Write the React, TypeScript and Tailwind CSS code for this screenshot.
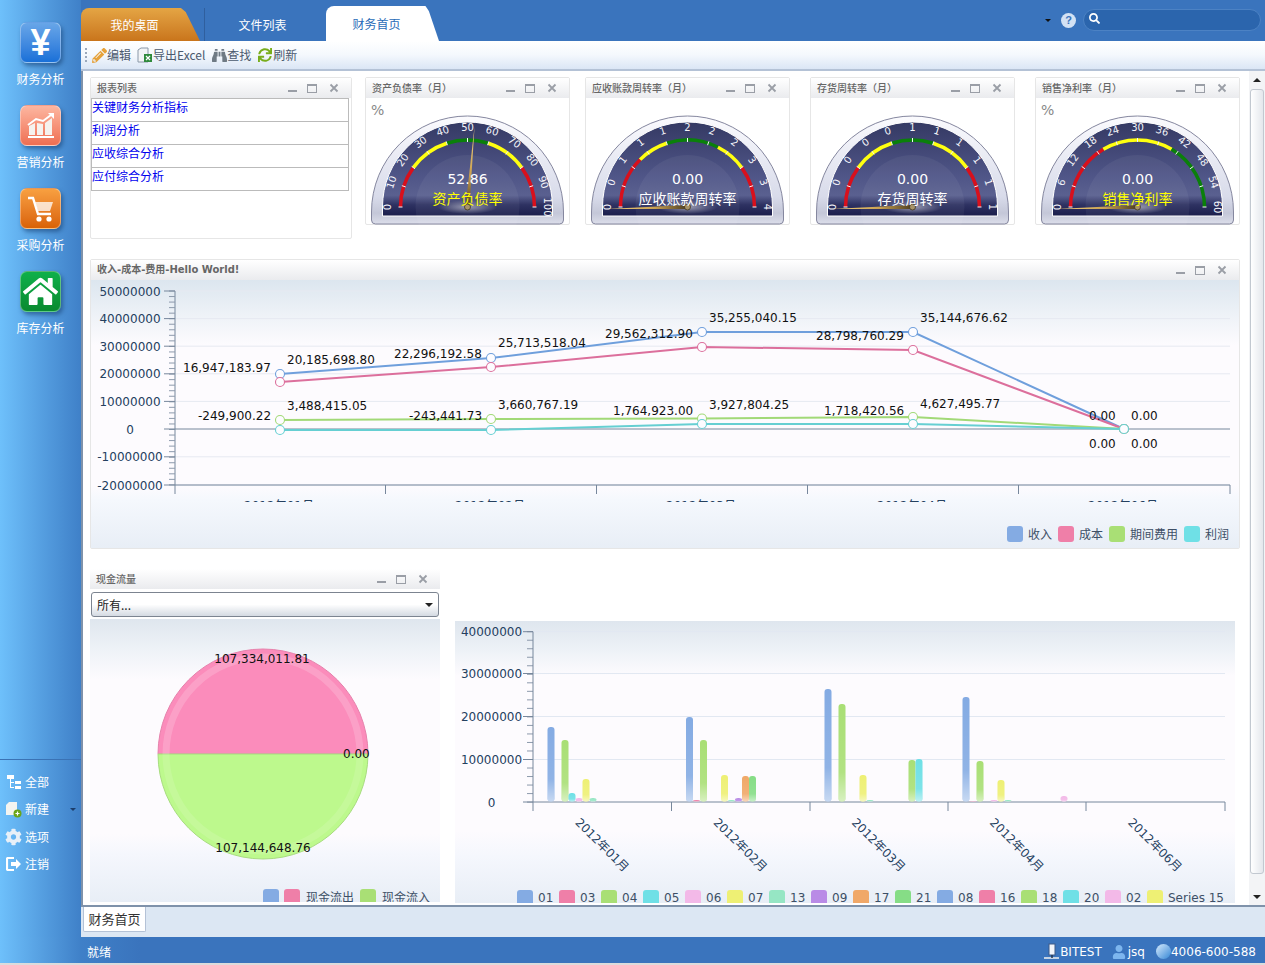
import { FaBinoculars, FaCog, FaHome, FaPencilAlt, FaSearch, FaSync, FaUser } from 'react-icons/fa';

const uiFont = "font-['Noto_Sans_CJK_SC','Liberation_Sans',sans-serif]";
const chartFont = "font-['DejaVu_Sans','Noto_Sans_CJK_SC',sans-serif]";

function WindowButtons({ right = false }: { right?: boolean }) {
    return (
        <div className={`flex items-start gap-[10px] text-[#8b8f96] ${right ? 'mr-[12px]' : 'mr-[12px]'}`}>
            <span className="mt-[7px] h-[2px] w-[9px] bg-[#9a9ea6]" />
            <span className="mt-[1px] h-[9px] w-[10px] border border-[#9a9ea6] border-t-2" />
            <svg width="10" height="10" viewBox="0 0 10 10" className="ml-[2px]">
                <path d="M1.5 1.5l7 7M8.5 1.5l-7 7" stroke="#9a9ea6" strokeWidth="1.8" />
            </svg>
        </div>
    );
}

function PanelHeader({ title, buttons = true, bold = false }: { title: string; buttons?: boolean; bold?: boolean }) {
    return (
        <div className="flex h-[20px] shrink-0 items-center justify-between bg-gradient-to-b from-white to-[#eaebee] pl-[6px]">
            <span className={`text-[10px] leading-none text-[#666] ${bold ? "font-bold font-['DejaVu_Sans','Noto_Sans_CJK_SC',sans-serif]" : 'font-medium'}`}>{title}</span>
            {buttons && <WindowButtons />}
        </div>
    );
}

type Seg = [number, number, string];

interface GaugeProps {
    id: string;
    title: string;
    value: string;
    labels: string[];
    segs: Seg[];
    needle: number;
    titleColor: string;
    percent?: boolean;
    className?: string;
}

function Gauge({ id, title, value, labels, segs, needle, titleColor, percent, className = '' }: GaugeProps) {
    const cx = 101.5;
    const cy = 109;
    const pt = (r: number, p: number) => [cx - r * Math.cos(p * Math.PI), cy - r * Math.sin(p * Math.PI)];
    const rad = (needle * Math.PI) / 180;
    const tip = [cx - 81 * Math.cos(rad), cy - 81 * Math.sin(rad)];
    const nx = Math.sin(rad) * 2;
    const ny = -Math.cos(rad) * 2;

    return (
        <div className={`h-[148px] w-[205px] shrink-0 rounded-[2px] border border-[#e6e6e6] bg-white ${className}`}>
            <PanelHeader title={title} />
            <svg width="203" height="127" viewBox="0 0 203 127" className={`block ${chartFont}`}>
                <defs>
                    <linearGradient id={`${id}-bezel`} x1="0" y1="0" x2="0" y2="1">
                        <stop offset="0" stopColor="#fbfbfe" />
                        <stop offset="0.75" stopColor="#d8dbea" />
                        <stop offset="0.9" stopColor="#c4c7d8" />
                        <stop offset="1" stopColor="#dcdeea" />
                    </linearGradient>
                    <linearGradient id={`${id}-face`} x1="0" y1="0" x2="0" y2="1">
                        <stop offset="0" stopColor="#343963" />
                        <stop offset="0.55" stopColor="#4e5486" />
                        <stop offset="0.78" stopColor="#5a6090" />
                        <stop offset="0.88" stopColor="#2e3262" />
                        <stop offset="1" stopColor="#1b1e4c" />
                    </linearGradient>
                    <linearGradient id={`${id}-needle`} gradientUnits="userSpaceOnUse" x1={tip[0]} y1={tip[1]} x2={cx} y2={cy}>
                        <stop offset="0" stopColor="#f6d684" />
                        <stop offset="0.6" stopColor="#c9a050" />
                        <stop offset="1" stopColor="#4a3c20" />
                    </linearGradient>
                    <radialGradient id={`${id}-glow`}>
                        <stop offset="0" stopColor="#ffffff" stopOpacity="0.5" />
                        <stop offset="1" stopColor="#ffffff" stopOpacity="0" />
                    </radialGradient>
                </defs>
                <path
                    d={`M${cx - 96} ${cy + 5} A96 96 0 0 1 ${cx + 96} ${cy + 5} V${cy + 13} Q${cx + 96} ${cy + 17} ${cx + 92} ${cy + 17} H${cx - 92} Q${cx - 96} ${cy + 17} ${cx - 96} ${cy + 13} Z`}
                    fill={`url(#${id}-bezel)`}
                    stroke="#85879f"
                />
                <path
                    d={`M${cx - 85} ${cy + 9} V${cy} A85 85 0 0 1 ${cx + 85} ${cy} V${cy + 9} Z`}
                    fill={`url(#${id}-face)`}
                    stroke="#ffffff"
                />
                <circle cx={cx} cy={cy} r="52" fill="#ffffff" opacity="0.05" />
                <ellipse cx={cx} cy={cy} rx="30" ry="7" fill={`url(#${id}-glow)`} />
                {segs.map(([a, b, color]) => {
                    const p0 = pt(67, a);
                    const p1 = pt(67, b);
                    return <path key={a} d={`M${p0[0]} ${p0[1]} A67 67 0 0 1 ${p1[0]} ${p1[1]}`} fill="none" stroke={color} strokeWidth="3.5" />;
                })}
                {labels.map((label, i) => {
                    const p = i / 10;
                    const a = pt(65, p);
                    const b = pt(69, p);
                    const t = pt(80, p);
                    return (
                        <g key={i}>
                            <line x1={a[0]} y1={a[1]} x2={b[0]} y2={b[1]} stroke="#f4f4f8" strokeWidth="1" />
                            <text
                                x={t[0]}
                                y={t[1]}
                                fill="#f4f5fa"
                                fontSize="10"
                                textAnchor="middle"
                                dominantBaseline="central"
                                transform={`rotate(${p * 180 - 90} ${t[0]} ${t[1]})`}
                            >
                                {label}
                            </text>
                        </g>
                    );
                })}
                <polygon points={`${cx + nx},${cy + ny} ${tip[0]},${tip[1]} ${cx - nx},${cy - ny}`} fill={`url(#${id}-needle)`} />
                <circle cx={cx} cy={cy} r="3" fill="#a89468" stroke="#3c3420" strokeWidth="0.8" />
                <text x={cx} y="86" fill="#ffffff" fontSize="14" textAnchor="middle">{value}</text>
                <text x={cx} y="106" fill={titleColor} fontSize="14" textAnchor="middle" className={uiFont}>{title.replace('（月）', '')}</text>
                {percent && <text x="5" y="17" fill="#888" fontSize="14">%</text>}
            </svg>
        </div>
    );
}

function Swatch({ color }: { color: string }) {
    return <span className="h-[16px] w-[16px] shrink-0 rounded-[3px]" style={{ background: color }} />;
}

const lineSeries = [
    { color: '#6f9fdc', pts: [[279, 374], [490, 358], [701, 332], [912, 332], [1123, 429]] },
    { color: '#dc6f9c', pts: [[279, 382], [490, 367], [701, 347], [912, 350], [1123, 429]] },
    { color: '#a2d977', pts: [[279, 420], [490, 419], [701, 418.5], [912, 417], [1123, 429]] },
    { color: '#66cfd2', pts: [[279, 430], [490, 430], [701, 424], [912, 424], [1123, 429]] },
];

const lineLabels: [string, number, number][] = [
    ['16,947,183.97', 182, 372], ['20,185,698.80', 286, 364], ['22,296,192.58', 393, 358], ['25,713,518.04', 497, 347],
    ['29,562,312.90', 604, 338], ['35,255,040.15', 708, 322], ['28,798,760.29', 815, 340], ['35,144,676.62', 919, 322],
    ['-249,900.22', 197, 420], ['3,488,415.05', 286, 410], ['-243,441.73', 408, 420], ['3,660,767.19', 497, 409],
    ['1,764,923.00', 612, 415], ['3,927,804.25', 708, 409], ['1,718,420.56', 823, 415], ['4,627,495.77', 919, 408],
    ['0.00', 1088, 420], ['0.00', 1130, 420], ['0.00', 1088, 448], ['0.00', 1130, 448],
];

function LineChart() {
    const yTicks = [291, 318.6, 346.2, 373.8, 401.4, 429, 456.8, 485];
    const yLabels = ['50000000', '40000000', '30000000', '20000000', '10000000', '0', '-10000000', '-20000000'];
    const minor = Array.from({ length: 36 }, (_, i) => 291 + i * 5.54);
    return (
        <svg width="1148" height="222" viewBox="90 280 1148 222" className={`block ${chartFont}`}>
            {yTicks.map((y, i) => (
                <line key={y} x1="174" x2="1229" y1={y} y2={y} stroke={i === 5 ? '#77879c' : '#e6e9f1'} />
            ))}
            <line x1="174" x2="174" y1="291" y2="494" stroke="#77879c" />
            <line x1="174" x2="1229" y1="485" y2="485" stroke="#77879c" />
            {minor.map((y) => (
                <line key={y} x1="168" x2="174" y1={y} y2={y} stroke="#8d9aac" />
            ))}
            {yTicks.map((y, i) => (
                <g key={y}>
                    <line x1="163" x2="174" y1={y} y2={y} stroke="#77879c" />
                    <text x="129" y={y + 4.5} fontSize="12" fill="#24405f" textAnchor="middle">{yLabels[i]}</text>
                </g>
            ))}
            {[384.5, 595.5, 806.5, 1017.5, 1229].map((x) => (
                <line key={x} x1={x} x2={x} y1="485" y2="494" stroke="#77879c" />
            ))}
            {['2012年01月', '2012年02月', '2012年03月', '2012年04月', '2012年06月'].map((t, i) => (
                <text key={t} x={278 + i * 211} y="510" fontSize="12" fill="#24405f" textAnchor="middle">{t}</text>
            ))}
            {lineSeries.map((s) => (
                <g key={s.color}>
                    <polyline points={s.pts.map((p) => p.join(',')).join(' ')} fill="none" stroke={s.color} strokeWidth="2" />
                    {s.pts.map((p) => (
                        <circle key={p[0]} cx={p[0]} cy={p[1]} r="4.5" fill="#fdfcff" stroke={s.color} strokeWidth="1.1" />
                    ))}
                </g>
            ))}
            {lineLabels.map(([t, x, y]) => (
                <text key={`${t}${x}${y}`} x={x} y={y} fontSize="12" fill="#111">{t}</text>
            ))}
        </svg>
    );
}

const barColors = ['#84abe3', '#ef7fa8', '#a9df75', '#6fe0e6', '#f3b9e8', '#eef074', '#96e6c4', '#b98be6', '#f0a868', '#86dd86', '#84abe3', '#ef7fa8', '#a9df75', '#6fe0e6', '#f3b9e8', '#eef074'];
const barNames = ['01', '03', '04', '05', '06', '07', '13', '09', '17', '21', '08', '16', '18', '20', '02', 'Series 15'];

// [series index, top y] per month
const barData: [number, number][][] = [
    [[0, 727], [2, 740], [3, 793], [4, 798], [5, 779], [6, 798]],
    [[0, 717], [1, 800], [2, 740], [5, 775], [6, 800], [7, 798], [8, 776], [9, 776]],
    [[0, 689], [2, 704], [5, 775], [6, 800], [12, 760], [13, 759]],
    [[0, 697], [1, 801], [2, 761], [4, 800], [5, 780], [6, 800], [14, 796]],
];

function BarChart() {
    const yTicks = [631.7, 673.5, 716.5, 759.5, 802];
    const labels = ['40000000', '30000000', '20000000', '10000000', '0'];
    const minor = Array.from({ length: 21 }, (_, i) => 631.7 + i * 8.52);
    const cats = [532, 670.5, 809, 947, 1085];
    return (
        <svg width="780" height="269" viewBox="454 621 780 269" className={`block ${chartFont}`}>
            <defs>
                <linearGradient id="barshine" x1="0" y1="0" x2="0" y2="1">
                    <stop offset="0" stopColor="#ffffff" stopOpacity="0" />
                    <stop offset="0.7" stopColor="#ffffff" stopOpacity="0.1" />
                    <stop offset="1" stopColor="#ffffff" stopOpacity="0.55" />
                </linearGradient>
            </defs>
            {yTicks.slice(0, 4).map((y) => (
                <line key={y} x1="532" x2="1224" y1={y} y2={y} stroke="#e2e8f2" />
            ))}
            {minor.map((y) => (
                <line key={y} x1="526" x2="532" y1={y} y2={y} stroke="#8d9aac" />
            ))}
            {yTicks.map((y, i) => (
                <g key={y}>
                    <line x1="522" x2="532" y1={y} y2={y} stroke="#77879c" />
                    <text x="490.5" y={y + 4.5} fontSize="12" fill="#24405f" textAnchor="middle">{labels[i]}</text>
                </g>
            ))}
            <line x1="532" x2="532" y1="631.7" y2="811" stroke="#77879c" />
            <line x1="532" x2="1224" y1="802" y2="802" stroke="#77879c" />
            {[670.5, 809, 947, 1085, 1224].map((x) => (
                <line key={x} x1={x} x2={x} y1="802" y2="811" stroke="#77879c" />
            ))}
            {barData.map((month, m) =>
                month.map(([s, top]) => {
                    const x = cats[m] + 14.5 + s * 7;
                    return (
                        <g key={`${m}-${s}`}>
                            <rect x={x} y={top} width="7" height={801.5 - top} rx="3" fill={barColors[s]} />
                            <rect x={x} y={top} width="7" height={801.5 - top} rx="3" fill="url(#barshine)" />
                        </g>
                    );
                }),
            )}
            {['2012年01月', '2012年02月', '2012年03月', '2012年04月', '2012年06月'].map((t, i) => {
                const x = 601 + i * 138.2;
                return (
                    <text key={t} x={x} y="849" fontSize="12" fill="#24405f" textAnchor="middle" transform={`rotate(45 ${x} 845)`}>{t}</text>
                );
            })}
        </svg>
    );
}

function PieChart() {
    return (
        <svg width="350" height="250" viewBox="89 620 350 250" className={`block ${chartFont}`}>
            <path d="M157 755A105 105 0 0 1 367 755Z" fill="#fb8cbb" stroke="#e682ac" />
            <path d="M157 755A105 105 0 0 0 367 755Z" fill="#bdf98d" stroke="#a8dc80" />
            <path d="M165 755A97 97 0 0 1 359 755" fill="none" stroke="#ffffff" strokeOpacity="0.18" strokeWidth="7" />
            <path d="M165 755A97 97 0 0 0 359 755" fill="none" stroke="#ffffff" strokeOpacity="0.12" strokeWidth="7" />
            <text x="261" y="664" fontSize="12" fill="#111" textAnchor="middle">107,334,011.81</text>
            <text x="342" y="759" fontSize="12" fill="#111">0.00</text>
            <text x="262" y="853" fontSize="12" fill="#111" textAnchor="middle">107,144,648.76</text>
        </svg>
    );
}

function SideNav({ label, icon, box }: { label: string; icon: React.ReactNode; box: string }) {
    return (
        <div className="flex h-[83px] flex-col items-center">
            <div className={`flex h-[41px] w-[41px] items-center justify-center rounded-[7px] border border-[#ffffff55] shadow-[2px_3px_4px_rgba(20,60,110,0.55)] ${box}`}>
                {icon}
            </div>
            <span className="mt-[8px] text-[12px] leading-[16px] text-white">{label}</span>
        </div>
    );
}

function SideAction({ icon, label, arrow }: { icon: React.ReactNode; label: string; arrow?: boolean }) {
    return (
        <div className="relative flex h-[27.5px] items-center gap-[3px] pl-[5px]">
            <span className="flex w-[17px] justify-center">{icon}</span>
            <span className="text-[12px] text-white">{label}</span>
            {arrow && <span className="absolute right-[5px] top-[12px] h-0 w-0 border-x-[3px] border-t-[3px] border-x-transparent border-t-[#1c3d6b]" />}
        </div>
    );
}

function ToolItem({ icon, label }: { icon: React.ReactNode; label: string }) {
    return (
        <div className="flex items-center">
            <span className="flex w-[16px] justify-center">{icon}</span>
            <span className="text-[12px] text-[#4b5a6e]">{label}</span>
        </div>
    );
}

function Sidebar() {
    return (
        <aside className="flex w-[81px] shrink-0 flex-col bg-gradient-to-r from-[#6ec0fb] to-[#3f80c8] pt-[22px]">
            <SideNav
                label="财务分析"
                box="bg-gradient-to-b from-[#68a6e8] to-[#1870d8]"
                icon={<span className="font-['Liberation_Sans'] text-[36px] font-bold leading-none text-white">¥</span>}
            />
            <SideNav
                label="营销分析"
                box="bg-gradient-to-b from-[#fcb6a0] to-[#ee6e52]"
                icon={
                    <svg width="30" height="30" viewBox="0 0 30 30">
                        <path d="M3 24V15l6-3v12zM11 24V12l6 1v11zM19 24V12l7-5v17z" fill="#f5f2ee" />
                        <path d="M2 26h26" stroke="#fff" strokeWidth="2" />
                        <path d="M2 14l8-6 7 2 8-6" fill="none" stroke="#fff" strokeWidth="2" />
                        <path d="M22 2h6v6z" fill="#fff" />
                    </svg>
                }
            />
            <SideNav
                label="采购分析"
                box="bg-gradient-to-b from-[#f8a040] to-[#d96204]"
                icon={
                    <svg width="30" height="30" viewBox="0 0 30 30">
                        <path d="M2 4h5l5 16h13" fill="none" stroke="#fff" strokeWidth="2.4" />
                        <path d="M9 8h18l-3 9H12z" fill="#fff" opacity="0.75" />
                        <circle cx="13" cy="25" r="2.6" fill="#fff" />
                        <circle cx="23" cy="25" r="2.6" fill="#fff" />
                    </svg>
                }
            />
            <SideNav
                label="库存分析"
                box="bg-gradient-to-b from-[#0fb04a] to-[#0a8a30]"
                icon={<FaHome className="text-[35px] text-white" />}
            />
            <div className="mt-[405px] border-t border-[#3a72b4] pt-[8px]">
                <SideAction
                    label="全部"
                    icon={
                        <svg width="16" height="16" viewBox="0 0 16 16" fill="#fff">
                            <path d="M1 1h7v4H1zM4 5h1v8h3v1H4zM5 8h3v1H5z" />
                            <path d="M9 7h6v3H9zM9 12h6v3H9z" />
                        </svg>
                    }
                />
                <SideAction
                    label="新建"
                    arrow
                    icon={
                        <svg width="17" height="17" viewBox="0 0 17 17">
                            <path d="M1 4l3-3h8v13H1z" fill="#f4f4f0" />
                            <circle cx="12.5" cy="12.5" r="4" fill="#6aa51a" />
                            <path d="M12.5 10.5v4M10.5 12.5h4" stroke="#fff" strokeWidth="1.2" />
                        </svg>
                    }
                />
                <SideAction label="选项" icon={<FaCog className="text-[18px] text-[#e8f0f8]" />} />
                <SideAction
                    label="注销"
                    icon={
                        <svg width="16" height="14" viewBox="0 0 16 14">
                            <path d="M8 1H2a1 1 0 0 0-1 1v10a1 1 0 0 0 1 1h6" fill="none" stroke="#fff" strokeWidth="2.2" />
                            <path d="M5 5h5V2l5 5-5 5V9H5z" fill="#fff" />
                        </svg>
                    }
                />
            </div>
        </aside>
    );
}

function TopBar() {
    return (
        <div className="flex h-[41px] shrink-0 items-end bg-[#3a74bd]">
            <div className="flex h-[33px] w-[119px] items-center justify-center rounded-tl-[8px] bg-gradient-to-b from-[#e4a544] to-[#c9751b] pr-[12px] text-[12px] text-white [clip-path:polygon(0_0,84%_0,88%_12%,100%_100%,0_100%)]">
                我的桌面
            </div>
            <div className="ml-[4px] flex h-[33px] w-[122px] items-center justify-center border-l border-[#2f5f9e] pr-[6px] text-[12px] text-white">
                文件列表
            </div>
            <div className="flex h-[35px] w-[113px] items-center justify-center rounded-t-[8px] bg-white pr-[12px] text-[12px] text-[#2a6cb8] [clip-path:polygon(0_0,88%_0,91%_14%,100%_100%,0_100%)]">
                财务首页
            </div>
            <div className="ml-auto flex h-[41px] items-center pb-[1px]">
                <span className="mr-[10px] mt-[1px] h-0 w-0 border-x-[3px] border-t-[3px] border-x-transparent border-t-[#111]" />
                <span className="mr-[7px] flex h-[15px] w-[15px] items-center justify-center rounded-full bg-[#d3e2f4] font-['Liberation_Sans'] text-[11px] font-bold leading-none text-[#3a74bd]">?</span>
                <div className="mr-[4px] flex h-[22px] w-[178px] items-center rounded-full border border-[#4c82c4] bg-[#2b65ad] pb-[3px] pl-[5px]">
                    <FaSearch className="text-[11px] text-white" />
                </div>
            </div>
        </div>
    );
}

function Toolbar() {
    return (
        <div className="flex h-[30px] shrink-0 items-center gap-[6px] border-b-2 border-[#b4c2d6] bg-gradient-to-b from-white via-[#f4f8fd] to-[#dbe6f5] pl-[4px]">
            <div className="mr-[-2px] flex flex-col gap-[2px]">
                {[0, 1, 2, 3].map((i) => (
                    <span key={i} className="h-[2px] w-[2px] bg-[#9aa8bb]" />
                ))}
            </div>
            <ToolItem icon={<FaPencilAlt className="text-[15px] text-[#e6a23a]" />} label="编辑" />
            <ToolItem
                icon={
                    <svg width="16" height="16" viewBox="0 0 16 16">
                        <path d="M1 3l3-2h7v14H1z" fill="#f2f4f6" stroke="#8a98a8" />
                        <rect x="7" y="7" width="8" height="8" fill="#2f8a3c" />
                        <path d="M9 9l4 4M13 9l-4 4" stroke="#fff" strokeWidth="1.2" />
                    </svg>
                }
                label="导出Excel"
            />
            <ToolItem icon={<FaBinoculars className="text-[15px] text-[#6f7a84]" />} label="查找" />
            <ToolItem icon={<FaSync className="text-[14px] text-[#78ad1c]" />} label="刷新" />
        </div>
    );
}

function ReportList() {
    const rows = ['关键财务分析指标', '利润分析', '应收综合分析', '应付综合分析'];
    return (
        <div className="h-[162px] w-[262px] shrink-0 rounded-[2px] border border-[#e6e6e6] bg-white">
            <PanelHeader title="报表列表" />
            <div className="w-[258px] border border-[#bbb] border-b-0">
                {rows.map((r) => (
                    <div key={r} className="h-[23px] border-b border-[#bbb] text-[12px] leading-[16px] text-[#0000ee]">{r}</div>
                ))}
            </div>
        </div>
    );
}

function Content() {
    const n2 = ['0', '0', '1', '1', '1', '2', '2', '2', '3', '3', '4'];
    const n3 = ['0', '0', '0', '0', '0', '1', '1', '1', '1', '1', '1'];
    return (
        <div className="flex min-w-0 flex-1 flex-col overflow-hidden pl-[7px] pt-[6px]">
            <div className="flex h-[182px] shrink-0 items-start">
                <ReportList />
                <Gauge
                    id="g1"
                    className="ml-[13px]"
                    title="资产负债率（月）"
                    value="52.86"
                    percent
                    titleColor="#ffff00"
                    needle={95}
                    labels={['0', '10', '20', '30', '40', '50', '60', '70', '80', '90', '100']}
                    segs={[[0, 0.2, '#d8101c'], [0.2, 0.4, '#ffff10'], [0.4, 0.6, '#0a800a'], [0.6, 0.8, '#ffff10'], [0.8, 1, '#d8101c']]}
                />
                <Gauge
                    id="g2"
                    className="ml-[15px]"
                    title="应收账款周转率（月）"
                    value="0.00"
                    titleColor="#ffffff"
                    needle={-1.5}
                    labels={n2}
                    segs={[[0, 0.25, '#d8101c'], [0.25, 0.4, '#ffff10'], [0.4, 0.65, '#0a800a'], [0.65, 0.8, '#ffff10'], [0.8, 1, '#d8101c']]}
                />
                <Gauge
                    id="g3"
                    className="ml-[20px]"
                    title="存货周转率（月）"
                    value="0.00"
                    titleColor="#ffffff"
                    needle={-1.5}
                    labels={n3}
                    segs={[[0, 0.2, '#d8101c'], [0.2, 0.4, '#ffff10'], [0.4, 0.6, '#0a800a'], [0.6, 0.8, '#ffff10'], [0.8, 1, '#d8101c']]}
                />
                <Gauge
                    id="g4"
                    className="ml-[20px]"
                    title="销售净利率（月）"
                    value="0.00"
                    percent
                    titleColor="#ffff00"
                    needle={-1.5}
                    labels={['0', '6', '12', '18', '24', '30', '36', '42', '48', '54', '60']}
                    segs={[[0, 0.33, '#d8101c'], [0.33, 0.67, '#ffff10'], [0.67, 1, '#0a800a']]}
                />
            </div>

            <div className="h-[290px] w-[1150px] shrink-0 rounded-[2px] border border-[#e6e6e6] bg-white">
                <PanelHeader title="收入-成本-费用-Hello World!" bold />
                <div className="h-[268px] bg-[linear-gradient(to_bottom,#dce6ef_0,#eef2f7_35px,#fdfbfe_65px,#fdfbfe_205px,#f5f8fd_220px,#e8eef6_268px)]">
                    <LineChart />
                    <div className={`mt-[23px] flex items-center justify-end gap-[5px] pr-[10px] text-[12px] text-[#3d4f66] ${uiFont}`}>
                        <Swatch color="#84abe3" /><span className="mr-[1px]">收入</span>
                        <Swatch color="#ef7fa8" /><span className="mr-[1px]">成本</span>
                        <Swatch color="#a9df75" /><span className="mr-[1px]">期间费用</span>
                        <Swatch color="#6fe0e6" /><span>利润</span>
                    </div>
                </div>
            </div>

            <div className="mt-[20px] flex shrink-0 items-start">
                <div className="w-[350px] shrink-0 rounded-[2px]">
                    <PanelHeader title="现金流量" />
                    <div className="flex h-[25px] items-center justify-between rounded-[3px] border border-[#7c8490] bg-gradient-to-b from-white via-white to-[#d4dae2] px-[5px] text-[12px] text-[#222] mx-[1px] mt-[3px]">
                        <span>所有...</span>
                        <span className="h-0 w-0 border-x-[4px] border-t-[4px] border-x-transparent border-t-[#222]" />
                    </div>
                    <div className="mt-[2px] h-[283px] bg-[linear-gradient(to_bottom,#dfe6ee_0,#eef2f7_30px,#fdfbfe_60px,#fdfbfe_215px,#f5f7fd_235px,#e8eef6_283px)]">
                        <PieChart />
                        <div className={`mt-[20px] flex h-[13px] items-start justify-end gap-[5px] overflow-hidden pr-[10px] text-[12px] leading-[16px] text-[#3d4f66] ${uiFont}`}>
                            <Swatch color="#84abe3" />
                            <Swatch color="#ef7fa8" /><span className="ml-[1px] mr-[1px]">现金流出</span>
                            <Swatch color="#a9df75" /><span className="ml-[1px]">现金流入</span>
                        </div>
                    </div>
                </div>
                <div className="ml-[15px] mt-[52px] h-[282px] w-[780px] shrink-0 bg-[linear-gradient(to_bottom,#dfe6ee_0,#eef2f7_30px,#fdfbfe_55px,#fdfbfe_210px,#f5f7fd_235px,#e8eef6_282px)]">
                    <BarChart />
                    <div className={`flex h-[13px] items-start overflow-hidden pl-[62px] text-[12px] leading-[16px] text-[#3d4f66] ${chartFont}`}>
                        {barNames.map((name, i) => (
                            <div key={name} className="flex w-[42px] shrink-0 items-start gap-[5px] whitespace-nowrap">
                                <Swatch color={barColors[i]} />
                                <span>{name}</span>
                            </div>
                        ))}
                    </div>
                </div>
            </div>
        </div>
    );
}

function Scrollbar() {
    return (
        <div className="flex w-[16px] shrink-0 flex-col items-center bg-[#f3f4f6]">
            <span className="mt-[7px] h-0 w-0 border-x-[4px] border-b-[4px] border-x-transparent border-b-[#222]" />
            <div className="mt-[7px] h-[785px] w-[14px] rounded-[3px] border border-[#c2c8d0] bg-gradient-to-r from-white to-[#e4e7ec]" />
            <span className="mt-[21px] h-0 w-0 border-x-[4px] border-t-[4px] border-x-transparent border-t-[#222]" />
        </div>
    );
}

function StatusBar() {
    return (
        <div className={`flex h-[26px] shrink-0 items-center bg-[linear-gradient(to_right,#6ec0fb_0,#3f80c8_81px,#3a74bd_140px)] pl-[87px] pr-[9px] text-[12px] text-white ${chartFont}`}>
            <span className={`mt-[4px] ${uiFont}`}>就绪</span>
            <div className="ml-auto mt-[3px] flex items-center">
                <svg width="17" height="18" viewBox="0 0 17 18">
                    <rect x="6" y="1" width="6" height="11" fill="#f0f4fa" stroke="#3c5a88" />
                    <path d="M1 15h15" stroke="#f2f2f2" strokeWidth="1.5" />
                    <path d="M9 12v3" stroke="#26364e" strokeWidth="1.5" />
                </svg>
                <span>BITEST</span>
                <FaUser className="ml-[10px] mr-[2px] text-[14px] text-[#7db6ee]" />
                <span>jsq</span>
                <span className="ml-[11px] h-[15px] w-[15px] rounded-full bg-gradient-to-br from-[#d6ebfb] to-[#2d86d4]" />
                <span>4006-600-588</span>
            </div>
        </div>
    );
}

export default function App() {
    return (
        <div className={`flex h-[965px] w-[1265px] flex-col overflow-hidden bg-[#dcdcdc] ${uiFont}`}>
            <div className="flex h-[937px] shrink-0">
                <Sidebar />
                <main className="flex min-w-0 flex-1 flex-col">
                    <TopBar />
                    <Toolbar />
                    <div className="flex h-[836px] shrink-0 border-b-2 border-l-2 border-[#7f92aa] bg-white">
                        <Content />
                        <Scrollbar />
                    </div>
                    <div className="flex h-[30px] shrink-0 items-start bg-[#dce7f3] pl-[2px]">
                        <div className="flex h-[25px] w-[63px] items-center justify-center rounded-b-[2px] border border-t-0 border-[#b4c2d6] bg-white text-[13px] text-[#333]">
                            财务首页
                        </div>
                    </div>
                </main>
            </div>
            <StatusBar />
        </div>
    );
}
